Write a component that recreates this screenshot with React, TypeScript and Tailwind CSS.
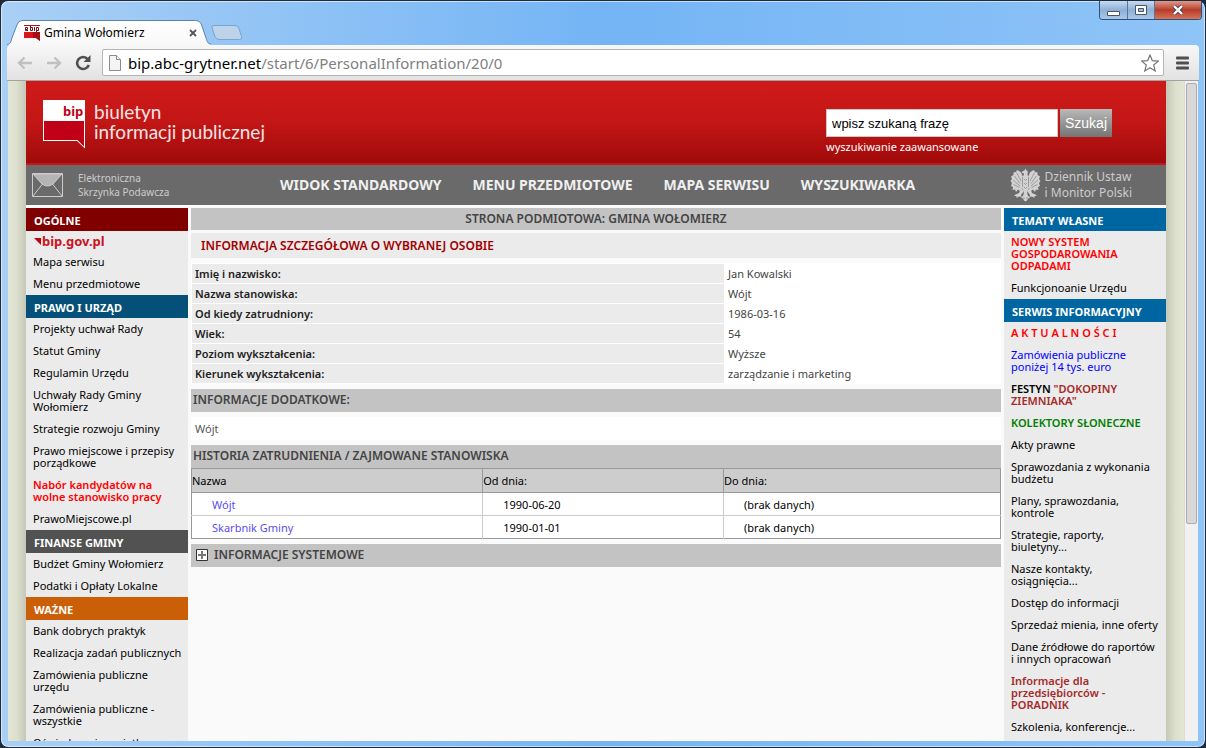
import { ReactNode } from "react";

type MenuItem = { label: ReactNode; extra?: string };

interface IMenuSection {
  title: string;
  background: string;
  items: MenuItem[];
  children?: ReactNode;
}

const generalItems: MenuItem[] = [
  { label: "Mapa serwisu" },
  { label: "Menu przedmiotowe" },
];

const lawItems: MenuItem[] = [
  { label: "Projekty uchwał Rady" },
  { label: "Statut Gminy" },
  { label: "Regulamin Urzędu" },
  { label: "Uchwały Rady Gminy Wołomierz" },
  { label: "Strategie rozwoju Gminy" },
  { label: "Prawo miejscowe i przepisy porządkowe" },
  {
    label: "Nabór kandydatów na wolne stanowisko pracy",
    extra: "font-semibold text-[#ff0000]",
  },
  { label: "PrawoMiejscowe.pl" },
];

const financeItems: MenuItem[] = [
  { label: "Budżet Gminy Wołomierz" },
  { label: "Podatki i Opłaty Lokalne" },
];

const importantItems: MenuItem[] = [
  { label: "Bank dobrych praktyk" },
  { label: "Realizacja zadań publicznych" },
  { label: "Zamówienia publiczne urzędu" },
  { label: "Zamówienia publiczne - wszystkie" },
  { label: "Oświadczenia majątkowe" },
];

const ownItems: MenuItem[] = [
  {
    label: "NOWY SYSTEM GOSPODAROWANIA ODPADAMI",
    extra: "font-semibold text-[#ff0000]",
  },
  { label: "Funkcjonoanie Urzędu" },
];

const newsItems: MenuItem[] = [
  { label: "A K T U A L N O Ś C I", extra: "font-semibold text-[#ff0000]" },
  {
    label: "Zamówienia publiczne poniżej 14 tys. euro",
    extra: "text-[#0000ff]",
  },
  {
    label: (
      <>
        FESTYN <span className="text-[#a52a2a]">"DOKOPINY ZIEMNIAKA"</span>
      </>
    ),
    extra: "font-semibold",
  },
  { label: "KOLEKTORY SŁONECZNE", extra: "font-semibold text-[#008000]" },
  { label: "Akty prawne" },
  { label: "Sprawozdania z wykonania budżetu" },
  { label: "Plany, sprawozdania, kontrole" },
  { label: "Strategie, raporty, biuletyny..." },
  { label: "Nasze kontakty, osiągnięcia..." },
  { label: "Dostęp do informacji" },
  { label: "Sprzedaż mienia, inne oferty" },
  { label: "Dane źródłowe do raportów i innych opracowań" },
  {
    label: "Informacje dla przedsiębiorców - PORADNIK",
    extra: "font-semibold text-[#a52a2a]",
  },
  { label: "Szkolenia, konferencje..." },
];

const personRows = [
  ["Imię i nazwisko:", "Jan Kowalski"],
  ["Nazwa stanowiska:", "Wójt"],
  ["Od kiedy zatrudniony:", "1986-03-16"],
  ["Wiek:", "54"],
  ["Poziom wykształcenia:", "Wyższe"],
  ["Kierunek wykształcenia:", "zarządzanie i marketing"],
];

const historyRows = [
  ["Wójt", "1990-06-20", "(brak danych)"],
  ["Skarbnik Gminy", "1990-01-01", "(brak danych)"],
];

const MenuSection = ({ title, background, items, children }: IMenuSection) => (
  <section>
    <h2
      className={`flex h-[23px] items-center px-2 pt-0.5 text-[11px] font-bold leading-4 text-white ${background}`}
    >
      {title}
    </h2>
    {children}
    <ul>
      {items.map((item, i) => (
        <li key={i} className="py-[5px] pl-[7px] pr-1.5">
          <a href="#" className={`block leading-3 ${item.extra ?? ""}`}>
            {item.label}
          </a>
        </li>
      ))}
    </ul>
  </section>
);

const BarTitle = ({ children }: { children: ReactNode }) => (
  <h2 className="flex h-[23px] items-center bg-[#c3c3c3] px-0.5 pb-0.5 text-xs font-semibold text-[#444]">
    {children}
  </h2>
);

const EagleIcon = () => (
  <svg width="31" height="34" viewBox="0 0 31 34">
    <g fill="#d2d2d2">
      <path d="M13 9L11 4.500 9 3 7 2 6 4 3.500 4.500 3.500 7 1 8.500 2 11 .5 13 2 15 1 18 3 19 2.500 22 5 21.500 6 24 8 21.500 10 23 13 18z" />
      <path d="M18 9l2-4.500L22 3l2-1 1 2 2.500.5V7L30 8.500 29 11l1.500 2-1.500 2 1 3-2 1 .5 3-2.500-.5-1 2.500-2-2.500-2 1.500-3-5z" />
      <path d="M12 9Q14.500 7 14 5.500L11.500 4.500Q13 2.500 14.500 2.500L15.500 .5 16.500 2.500Q18.500 3 17.500 5.500 17 7.500 19 9V20L17 24H14L12 20z" />
      <path d="M11 20L9 25 5.500 26.500 4 28 6.500 28 6.500 30 9 28.500 11.500 29 11 27 14 23zM20 20l2 5 3.500 1.500L27 28H24.500v2L22 28.500 19.500 29 20 27 17 23z" />
      <path d="M14 23h3l.5 4 2.500 3-2 .5-1 2-1.500 1-1.500-1-1-2-2-.5 2.500-3z" />
    </g>
    <g fill="none" stroke="#858585" strokeWidth="0.700">
      <path d="M6.500 4.500L11 13M4.500 8L10 15.500M3 12l7 6M3.500 16.500l6 3M24.500 4.500L20 13M26.500 8L21 15.500M28 12l-7 6M27.500 16.500l-6 3" />
      <path d="M12.500 9v10M18.500 9v10M14 11l1.500 1.500L17 11M14 15l1.500 1.500L17 15M14 19l1.500 1.500L17 19M14 29v2M17 29v2" />
    </g>
  </svg>
);

const BrowserTab = () => (
  <div className="relative flex h-[25px] w-[204px] items-center">
    <svg
      className="absolute inset-0"
      width="204"
      height="25"
      viewBox="0 0 206 25"
      preserveAspectRatio="none"
    >
      <defs>
        <linearGradient id="tab" x1="0" x2="0" y1="0" y2="1">
          <stop offset="0" stopColor="#fff" />
          <stop offset="1" stopColor="#f8f8f8" />
        </linearGradient>
      </defs>
      <path
        d="M0 25C4 24 4 21 5 18L10 5Q11.500 .5 15 .5H190Q195 .5 196.500 5L201 18C202 22 203 24 206 25Z"
        fill="url(#tab)"
      />
      <path
        d="M0 24.500C4 24 4 21 5 18L10 5Q11.500 .5 15 .5H190Q195 .5 196.500 5L201 18C202 22 203 23.500 206 24"
        fill="none"
        stroke="#5b83ad"
      />
    </svg>
    <svg
      className="relative ml-[17px]"
      width="16"
      height="16"
      viewBox="0 0 16 16"
    >
      <path d="M0 0h16v1H0z" fill="#a11a1e" />
      <path
        d="M1.500 4.500h2v-2h-2v3h2.500M6.500 1v4.500h2v-3h-2M10.500 2v4M12.500 7V2.500h2v3h-2"
        fill="none"
        stroke="#7a1216"
      />
      <path d="M0 7h16v9l-4-3H0z" fill="#d8161d" />
      <path d="M9 7h7v9l-4-3H9z" fill="#a80f14" />
    </svg>
    <span className="relative ml-1 flex-1 text-xs text-black">
      Gmina Wołomierz
    </span>
    <button aria-label="Zamknij kartę" className="relative mr-3.5">
      <svg width="8" height="8" viewBox="0 0 8 8" stroke="#555">
        <path d="M1 1l6 6M7 1L1 7" strokeWidth="1.800" />
      </svg>
    </button>
  </div>
);

const WindowButtons = () => (
  <div className="absolute right-[3px] top-0 flex h-[19px] overflow-hidden rounded-b border border-t-0 border-[#35506f]">
    <button
      aria-label="Minimalizuj"
      className="flex w-7 items-center justify-center border-r border-[#5b7593] bg-linear-to-b from-[#c5dbf2] via-[#8fb0d6] to-[#a5c8ec]"
    >
      <svg width="13" height="16" viewBox="0 0 13 16">
        <path d="M.5 9.500h12v4H.5z" fill="#fff" stroke="#4c5663" />
      </svg>
    </button>
    <button
      aria-label="Maksymalizuj"
      className="flex w-[27px] items-center justify-center border-r border-[#5b7593] bg-linear-to-b from-[#c5dbf2] via-[#8fb0d6] to-[#a5c8ec]"
    >
      <svg width="12" height="10" viewBox="0 0 12 10">
        <path d="M.5 .5h11v9H.5z" fill="#fff" stroke="#4c5663" />
        <path d="M3.500 3.500h5v3h-5z" fill="#9bbde0" stroke="#4c5663" />
      </svg>
    </button>
    <button
      aria-label="Zamknij"
      className="flex w-[46px] items-center justify-center bg-linear-to-b from-[#dc9a8d] via-[#b83a28] to-[#d4745c]"
    >
      <svg width="12" height="10" viewBox="0 0 12 10">
        <path d="M2 1l8 8M10 1L2 9" stroke="#4c4450" strokeWidth="4" />
        <path d="M2 1l8 8M10 1L2 9" stroke="#fff" strokeWidth="2.400" />
      </svg>
    </button>
  </div>
);

const Toolbar = () => (
  <div className="flex h-9 shrink-0 items-center rounded-t border-b border-[#a3a3a3] bg-linear-to-b from-[#f8f8f8] to-[#e2e2e2] pl-2.5 pr-2.5">
    <button aria-label="Wstecz">
      <svg width="16" height="14" viewBox="0 0 16 14" fill="none" stroke="#c0c0c0" strokeWidth="2.400">
        <path d="M15 7H2M7.500 1.500L2 7l5.500 5.500" />
      </svg>
    </button>
    <button aria-label="Dalej" className="ml-[13px]">
      <svg width="16" height="14" viewBox="0 0 16 14" fill="none" stroke="#c0c0c0" strokeWidth="2.400">
        <path d="M1 7h13M8.500 1.500L14 7l-5.500 5.500" />
      </svg>
    </button>
    <button aria-label="Odśwież" className="ml-[13px]">
      <svg width="16" height="16" viewBox="0 0 16 16">
        <path d="M12.800 4.200A6 6 0 1 0 13.800 10" fill="none" stroke="#505050" strokeWidth="2.600" />
        <path d="M15.500 0v7H8.500z" fill="#505050" />
      </svg>
    </button>
    <div className="ml-[11px] flex h-[27px] flex-1 items-center rounded-xs border border-[#b5b5b5] bg-white px-1.5">
      <svg width="12" height="16" viewBox="0 0 12 16" fill="#f4f4f4" stroke="#8c8c8c">
        <path d="M.5 .5h7l4 4v11H.5z" />
        <path d="M7.500 .5v4h4" />
      </svg>
      <a href="#" className="ml-[7px] flex-1 text-[15px] leading-5 text-[#808080]">
        <span className="text-black">bip.abc-grytner.net</span>
        /start/6/PersonalInformation/20/0
      </a>
      <button aria-label="Dodaj zakładkę" className="-mr-0.5">
        <svg width="18" height="18" viewBox="0 0 18 18" fill="#fff" stroke="#777" strokeWidth="1.200">
          <path d="M9 1l2.300 5.600 6 .5-4.600 3.900 1.500 6L9 13.800 3.800 17l1.500-6L.7 7.100l6-.5z" />
        </svg>
      </button>
    </div>
    <button aria-label="Menu" className="ml-3">
      <svg width="13" height="14" viewBox="0 0 13 14" fill="#4f4f4f">
        <rect width="13" height="3" y="0.500" rx="1" />
        <rect width="13" height="3" y="5.500" rx="1" />
        <rect width="13" height="3" y="10.500" rx="1" />
      </svg>
    </button>
  </div>
);

const SiteHeader = () => (
  <header className="flex h-[84px] items-start justify-between border-b-2 border-[#c4161a] bg-linear-to-b from-[#d01a1a] via-[#c31616] to-[#a00a0a] pl-[17px] pr-[54px]">
    <div className="flex pt-[19px]">
      <svg width="43" height="50" viewBox="0 0 43 50">
        <path d="M0 0h42v48.500L34 41H0z" fill="#fff" />
        <path d="M1 21h40v25.500L34.500 40H1z" fill="#c00016" />
        <text
          x="20"
          y="16"
          fontFamily="'Noto Sans', sans-serif"
          fontSize="13"
          fontWeight="700"
          fill="#c00016"
        >
          bip
        </text>
      </svg>
      <p className="ml-2 pt-0.5 font-[Lato,sans-serif] text-[19px] leading-5 text-[#f4e4e4]">
        biuletyn
        <br />
        informacji publicznej
      </p>
    </div>
    <form className="pt-7" onSubmit={(e) => e.preventDefault()}>
      <div className="flex gap-0.5">
        <input
          type="text"
          aria-label="Szukana fraza"
          defaultValue="wpisz szukaną frazę"
          className="h-7 w-[232px] border border-[#c9c9c9] bg-white px-[5px] font-['Liberation_Sans',sans-serif] text-[13px] text-black"
        />
        <button
          type="submit"
          className="h-7 w-[52px] bg-linear-to-b from-[#b9b9b9] to-[#747474] font-['Liberation_Sans',sans-serif] text-sm text-white"
        >
          Szukaj
        </button>
      </div>
      <a href="#" className="mt-0.5 block text-[11px] leading-4 text-white">
        wyszukiwanie zaawansowane
      </a>
    </form>
  </header>
);

const SiteNav = () => (
  <nav className="flex h-10 items-center justify-between bg-[#6a6a6a] pl-1.5 pr-[34px] text-[#ccc]">
    <a href="#" className="flex w-[248px] items-center gap-[15px] text-[10px] leading-[14px]">
      <svg width="31" height="24" viewBox="0 0 31 24" fill="none" stroke="#ccc">
        <path d="M1 1h29l-9 10q-5.500 4-11 0z" fill="#b4b4b4" />
        <path d="M.5 .5h30v23H.5zM1 23l9.500-12M30 23l-9.500-12" />
      </svg>
      <span>
        Elektroniczna
        <br />
        Skrzynka Podawcza
      </span>
    </a>
    <div className="flex flex-1 gap-[31px] text-sm font-bold text-[#f0f0f0]">
      <a href="#">WIDOK STANDARDOWY</a>
      <a href="#">MENU PRZEDMIOTOWE</a>
      <a href="#">MAPA SERWISU</a>
      <a href="#">WYSZUKIWARKA</a>
    </div>
    <a href="#" className="flex items-center gap-1 text-xs leading-4">
      <EagleIcon />
      <span>
        Dziennik Ustaw
        <br />i Monitor Polski
      </span>
    </a>
  </nav>
);

const PersonDetails = () => (
  <main className="min-w-0 flex-1">
    <h1 className="flex h-[22px] items-center justify-center bg-[#c3c3c3] text-xs font-semibold text-[#444]">
      STRONA PODMIOTOWA: GMINA WOŁOMIERZ
    </h1>
    <h2 className="mt-[3px] flex h-[25px] items-center bg-[#ebebeb] px-2.5 text-xs font-semibold text-[#a00000]">
      INFORMACJA SZCZEGÓŁOWA O WYBRANEJ OSOBIE
    </h2>
    <table className="mt-[5px] w-full table-fixed border-separate border-spacing-px bg-white">
      <tbody>
        {personRows.map(([name, value]) => (
          <tr key={name}>
            <th className="h-[19px] bg-[#ebebeb] px-[3px] py-0 text-left font-semibold leading-4 text-[#222]">
              {name}
            </th>
            <td className="w-[275px] px-[3px] py-0 leading-4 text-[#444]">
              {value}
            </td>
          </tr>
        ))}
      </tbody>
    </table>

    <div className="mt-[5px]">
      <BarTitle>INFORMACJE DODATKOWE:</BarTitle>
    </div>
    <p className="my-[5px] flex h-[23px] items-center bg-white px-1 pt-0.5 text-[#555]">
      Wójt
    </p>

    <BarTitle>HISTORIA ZATRUDNIENIA / ZAJMOWANE STANOWISKA</BarTitle>
    <table className="w-full table-fixed border-collapse border border-[#999] bg-white">
      <thead>
        <tr className="h-6 border-b border-[#999] bg-[#cdcdcd] text-left">
          <th className="w-[36%] border-r border-[#999] pt-0.5 font-normal">Nazwa</th>
          <th className="border-r border-[#999] pt-0.5 font-normal">Od dnia:</th>
          <th className="w-[277px] pt-0.5 font-normal">Do dnia:</th>
        </tr>
      </thead>
      <tbody>
        {historyRows.map(([name, from, to]) => (
          <tr key={name} className="h-[23px] border-b border-[#ccc] last:border-[#999]">
            <td className="border-r border-[#ccc] pl-5 pt-0.5 text-[#5b4cf0]">
              <a href="#">{name}</a>
            </td>
            <td className="border-r border-[#ccc] pl-5 pt-0.5">{from}</td>
            <td className="pl-5 pt-0.5">{to}</td>
          </tr>
        ))}
      </tbody>
    </table>

    <div className="mt-[5px]">
      <BarTitle>
        <button className="ml-[3px] flex items-center gap-1.5">
          <svg width="12" height="12" viewBox="0 0 12 12">
            <path d="M.5 .5h11v11H.5z" fill="#fff" stroke="#333" />
            <path d="M6 2v8M2 6h8" stroke="#777" strokeWidth="2" />
          </svg>
          INFORMACJE SYSTEMOWE
        </button>
      </BarTitle>
    </div>
  </main>
);

export default function App() {
  return (
    <div className="bg-[#1c2a3a] font-['Noto_Sans',sans-serif] text-[11px] text-black">
      <div className="relative flex h-screen flex-col rounded-lg border border-[#1d2b3d] bg-linear-to-r from-[#a9d0f5] via-[#74b4f5] to-[#8fc4f7] px-[6px] pb-1.5 shadow-[inset_0_0_0_1px_#ffffff90]">
        <WindowButtons />
        <div className="flex h-11 shrink-0 items-end">
          <BrowserTab />
          <svg className="mb-[5px]" width="31" height="15" viewBox="0 0 31 15">
            <path
              d="M3 .5h21q3 0 4 3l2.500 8q1 3-2 3H8q-3 0-4-3L1 3Q0 .5 3 .5z"
              fill="#bcd3ea"
              stroke="#7ba3cd"
            />
          </svg>
        </div>
        <Toolbar />
        <div className="mx-px flex min-h-0 flex-1 bg-[#dfe2cf]">
          <div className="w-[18px] shrink-0 bg-linear-to-r from-[#e3e6d5] via-[#dcdfcc] to-[#c5c8b7]" />
          <div className="min-w-0 flex-1 overflow-hidden bg-[#fafafa]">
            <SiteHeader />
            <SiteNav />
            <div className="flex gap-[3px] pt-[3px]">
              <aside className="w-[162px] shrink-0 bg-[#ebebeb]">
                <MenuSection title="OGÓLNE" background="bg-[#800000]" items={generalItems}>
                  <a href="#" className="flex h-5 items-center pl-2 text-[13px] font-bold leading-4 text-[#cc1122]">
                    <svg width="7" height="7" viewBox="0 0 7 7">
                      <path d="M0 0h7v7z" fill="#c00016" />
                    </svg>
                    <span className="ml-px">bip.gov.pl</span>
                  </a>
                </MenuSection>
                <MenuSection title="PRAWO I URZĄD" background="bg-[#055078]" items={lawItems} />
                <MenuSection title="FINANSE GMINY" background="bg-[#525252]" items={financeItems} />
                <MenuSection title="WAŻNE" background="bg-[#cb5f07]" items={importantItems} />
              </aside>
              <PersonDetails />
              <aside className="w-[162px] shrink-0 bg-[#ebebeb]">
                <MenuSection title="TEMATY WŁASNE" background="bg-[#0066a1]" items={ownItems} />
                <MenuSection title="SERWIS INFORMACYJNY" background="bg-[#0066a1]" items={newsItems} />
              </aside>
            </div>
          </div>
          <div className="w-[18px] shrink-0 bg-linear-to-r from-[#c5c8b7] via-[#dcdfcc] to-[#e3e6d5]" />
          <div className="w-[14px] shrink-0 border-l border-[#dcdcdc] bg-[#f1f1f1] px-px pt-0.5">
            <div className="h-[67%] rounded-xs border border-[#adadad] bg-[#d8d8d8]" />
          </div>
        </div>
      </div>
    </div>
  );
}
